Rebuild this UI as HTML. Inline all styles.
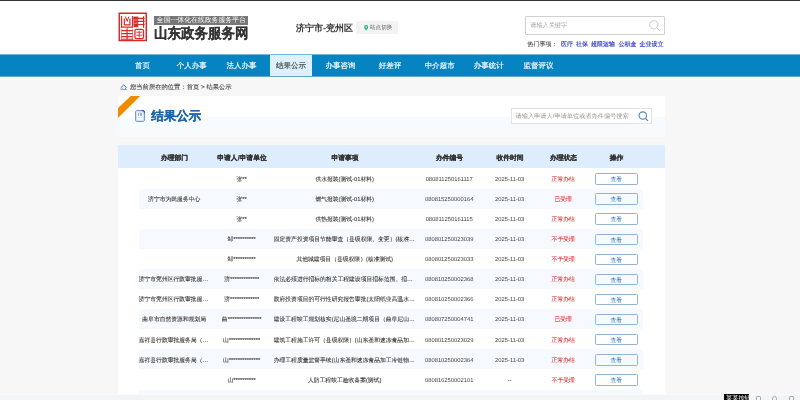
<!DOCTYPE html>
<html><head><meta charset="utf-8">
<style>
*{margin:0;padding:0;box-sizing:border-box}
html,body{width:800px;height:400px;overflow:hidden;text-rendering:geometricPrecision;background:#f7f7f7;font-family:"Liberation Sans",sans-serif;color:#333}
.abs{position:absolute}
#root{position:absolute;left:0;top:0;width:800px;height:400px;overflow:hidden;will-change:transform;background:#f7f7f7}
#top{left:0;top:0;width:800px;height:54px;background:#fff}
#topline{left:0;top:0;width:800px;height:1px;background:#333}
#nav{left:0;top:55px;width:800px;height:21px;background:#0683c1;box-shadow:0 -1px 0 rgba(6,131,193,0.55),0 1px 0 rgba(5,110,170,0.6)}
.nv{position:absolute;top:-0.4px;height:21.8px;line-height:21.5px;font-size:7.5px;color:#fff;-webkit-text-stroke-width:0.15px;text-align:center;width:42px}
.nv.on{background:#ddf1fc;color:#444}
#card{left:118px;top:96px;width:547px;height:297.5px}
#tbox{left:0;top:49.25px;width:547px;height:248.25px;background:#fff}
#chead{left:0;top:0;width:547px;height:40.5px;background:linear-gradient(#fff 48%,#f7fbfe 53%,#f7fbfe)}
#thead{left:0;top:49.25px;width:547px;height:23.15px;background:#ddedfd}
.th{position:absolute;top:1.3px;height:23.15px;line-height:23.15px;font-size:6.8px;font-weight:bold;color:#333;-webkit-text-stroke-width:0.15px;text-align:center}
.row{position:absolute;left:20.7px;width:504.7px;height:20.1px}
.row.s{background:#f6f9fe}
.td{position:absolute;top:1.4px;height:20px;line-height:20px;font-size:5.8px;color:#333;-webkit-text-stroke-width:0.08px;text-align:center;white-space:nowrap;overflow:hidden;text-overflow:ellipsis}
.red{color:#e03a3a}
.td.num{color:#444;-webkit-text-stroke-width:0}
.lk{top:41.4px;font-size:6px;line-height:9px;color:#2b3ac4;-webkit-text-stroke-width:0.15px;white-space:nowrap}
.btn{position:absolute;left:456px;top:4.9px;width:43.2px;height:11.4px;border:0.6px solid #93b4da;border-radius:1.5px;font-size:5.7px;color:#3170b8;text-align:center;line-height:12.2px}
</style></head><body>
<div id="root">
<div id="top" class="abs"></div>
<div id="topline" class="abs"></div>

<!-- logo -->
<svg class="abs" style="left:118px;top:12px" width="30" height="30" viewBox="0 0 30 30">
<g fill="none" stroke="#d42a2a" stroke-linecap="square">
<path d="M1.2 1.3H28.2M1.3 1.2V28.4M28.3 1.3V28.3M1.2 28.5H28.3" stroke-width="1.5"/>
<path d="M3.6 4.6V15.2H14.6V4.6M6.3 7V12.8H11.9V7" stroke-width="1.2"/>
<path d="M7.6 5L9 8.8M10.6 5L9.4 8.8" stroke-width="1"/>
<path d="M3.6 17V27.2M14.6 17V27.2" stroke-width="0.9" stroke="#e27a7a"/>
<path d="M4.2 18.6H14M4.2 21.6H14M4.2 24.6H14M9.1 16.8V27" stroke-width="1.2"/>
<path d="M3.6 27.2H14.6" stroke-width="1"/>
<path d="M15.8 6.3H26M20.3 9.4H26M20.3 12.5H26M25.6 4.8V15.2" stroke-width="1.2"/>
<rect x="16.9" y="17.3" width="8.6" height="9.4" rx="1.6" stroke-width="1.3"/>
<path d="M18.7 20.2H23.7M18.7 23.2H23.7M21.2 19.2V25" stroke-width="0.9"/>
</g>
<rect x="15.6" y="4.6" width="4.6" height="10.6" fill="#d42a2a"/>
<path d="M16.2 8H19.6M16.2 11.2H19.6" stroke="#f4c4c4" stroke-width="0.7"/>
</svg>
<div class="abs" style="left:154.4px;top:16px;width:93.2px;height:8.8px;background:#777;"></div>
<div class="abs" style="left:156.8px;top:16.9px;color:#fafafa;font-size:6.85px;line-height:8.4px;white-space:nowrap">全国一体化在线政务服务平台</div>
<div class="abs" style="left:154px;top:24.6px;font-size:13.5px;line-height:15px;color:#333;font-weight:bold;-webkit-text-stroke:0.1px #333;white-space:nowrap;transform:scale(1,1.06);transform-origin:0 0">山东政务服务网</div>

<div class="abs" style="left:296px;top:21.5px;font-size:9px;line-height:12px;color:#333;font-weight:bold;white-space:nowrap">济宁市-兖州区</div>
<div class="abs" style="left:356px;top:21.2px;width:42px;height:12.4px;background:#f3f3f3;border-radius:1px"></div>
<div class="abs" style="left:370px;top:21.8px;font-size:5.6px;line-height:12.4px;color:#555;white-space:nowrap">站点切换</div>
<svg class="abs" style="left:363.6px;top:25.2px" width="4.3" height="5.6" viewBox="0 0 10 14"><path d="M5 0C2.2 0 0 2.2 0 5c0 3.5 5 9 5 9s5-5.5 5-9C10 2.2 7.8 0 5 0z" fill="#2fb38a"/><circle cx="5" cy="5" r="2" fill="#fff"/></svg>

<!-- search -->
<div class="abs" style="left:525.3px;top:16.2px;width:139.7px;height:18.8px;border:0.7px solid #d0d0d0;border-radius:1px;background:#fff"></div>
<div class="abs" style="left:530.3px;top:17.2px;font-size:6.15px;line-height:17.8px;color:#a5a5a5;white-space:nowrap">请输入关键字</div>
<svg class="abs" style="left:649px;top:20px" width="11" height="11" viewBox="0 0 11 11"><circle cx="4.8" cy="4.8" r="4.2" fill="none" stroke="#b5b5b5" stroke-width="0.7"/><path d="M7.8 7.8L10.6 10.6" stroke="#b5b5b5" stroke-width="0.8"/></svg>
<div class="abs" style="left:527.5px;top:41.4px;font-size:6px;line-height:9px;color:#444;-webkit-text-stroke-width:0.08px;white-space:nowrap">热门事项：</div>
<div class="abs lk" style="left:561px">医疗</div>
<div class="abs lk" style="left:576px">社保</div>
<div class="abs lk" style="left:591px">超限运输</div>
<div class="abs lk" style="left:618.5px">公积金</div>
<div class="abs lk" style="left:639.5px">企业设立</div>

<!-- nav -->
<div id="nav" class="abs">
<div class="nv" style="left:121.5px">首页</div>
<div class="nv" style="left:170.8px">个人办事</div>
<div class="nv" style="left:220.5px">法人办事</div>
<div class="nv on" style="left:270.1px">结果公示</div>
<div class="nv" style="left:319.6px">办事咨询</div>
<div class="nv" style="left:369px">好差评</div>
<div class="nv" style="left:418.7px">中介超市</div>
<div class="nv" style="left:467.8px">办事统计</div>
<div class="nv" style="left:517.6px">监督评议</div>
</div>

<!-- breadcrumb -->
<svg class="abs" style="left:120px;top:83.5px" width="7.5" height="6.5" viewBox="0 0 15 13"><path d="M1.5 7.5L7.5 1.8L13.5 7.5" fill="none" stroke="#4d7fbf" stroke-width="2"/><path d="M4 7.5V10M11 7.5V10" stroke="#4d7fbf" stroke-width="1.6"/><path d="M1 11.5H14" stroke="#4d7fbf" stroke-width="1.8"/></svg>
<div class="abs" style="left:130px;top:82.5px;font-size:6.3px;line-height:10px;color:#444;-webkit-text-stroke-width:0.1px;white-space:nowrap">您当前所在的位置：首页 &gt; 结果公示</div>

<!-- card -->
<div id="card" class="abs">
 <div id="chead" class="abs"></div>
 <div id="tbox" class="abs"></div>
 <svg class="abs" style="left:0;top:0" width="23" height="23" viewBox="0 0 23 23"><path d="M12.8 0H22.2L0 22V12z" fill="#f08a00"/></svg>
 <svg class="abs" style="left:17px;top:13.5px" width="10" height="12" viewBox="0 0 10 12"><rect x="0.6" y="0.6" width="8.8" height="10.8" rx="1" fill="#e9f1fb" stroke="#6a91c6" stroke-width="1"/><rect x="2" y="2" width="6" height="8.2" fill="#fbfdff" stroke="#c0d3ec" stroke-width="0.5"/><path d="M6.8 0.6H8.2L9.4 1.8V3.2" fill="none" stroke="#2d5fa5" stroke-width="1.1"/><rect x="3" y="2.8" width="0.9" height="3" fill="#7f9fcc"/><rect x="4.8" y="2.8" width="2.2" height="3" fill="#8fb0d8"/><path d="M3 7.6H7.2" stroke="#c8d8ee" stroke-width="0.7"/></svg>
 <div class="abs" style="left:33.2px;top:13.2px;font-size:12.5px;line-height:15px;font-weight:bold;color:#1c63aa;-webkit-text-stroke:0.2px #1c63aa;white-space:nowrap">结果公示</div>
 <div class="abs" style="left:393.3px;top:12.4px;width:140.8px;height:15.2px;border:0.6px solid #e2e2e2;background:#fff"></div>
 <div class="abs" style="left:397.6px;top:14.3px;font-size:6.2px;line-height:14.5px;color:#999;white-space:nowrap">请输入申请人/申请单位或者办件编号搜索</div>
 <svg class="abs" style="left:519.6px;top:14.8px" width="11" height="11" viewBox="0 0 11 11"><circle cx="4.8" cy="4.6" r="3.7" fill="none" stroke="#4a80c0" stroke-width="1.1"/><path d="M7.4 7.3L10 9.9" stroke="#4a80c0" stroke-width="1.2"/></svg>

 <div id="thead" class="abs">
  <div class="th" style="left:21px;width:71px">办理部门</div>
  <div class="th" style="left:92px;width:64px">申请人/申请单位</div>
  <div class="th" style="left:156px;width:142px">申请事项</div>
  <div class="th" style="left:298px;width:67px">办件编号</div>
  <div class="th" style="left:365px;width:54px">收件时间</div>
  <div class="th" style="left:419px;width:53px">办理状态</div>
  <div class="th" style="left:472px;width:53px">操作</div>
 </div>
 <div id="rows">
<div class="row" style="top:72.4px"><div class="td" style="left:0px;width:71px"></div><div class="td" style="left:71px;width:64px">张**</div><div class="td" style="left:135px;width:142px">供水报装(测试-01材料)</div><div class="td num" style="left:277px;width:67px">080811250161117</div><div class="td num" style="left:344px;width:54px">2025-11-03</div><div class="td red" style="left:398px;width:53px">正常办结</div><div class="btn">查看</div></div>
<div class="row s" style="top:92.5px"><div class="td" style="left:0px;width:71px">济宁市为民服务中心</div><div class="td" style="left:71px;width:64px">张**</div><div class="td" style="left:135px;width:142px">燃气报装(测试-01材料)</div><div class="td num" style="left:277px;width:67px">080815250000164</div><div class="td num" style="left:344px;width:54px">2025-11-03</div><div class="td red" style="left:398px;width:53px">已受理</div><div class="btn">查看</div></div>
<div class="row" style="top:112.6px"><div class="td" style="left:0px;width:71px"></div><div class="td" style="left:71px;width:64px">张**</div><div class="td" style="left:135px;width:142px">供热报装(测试-01材料)</div><div class="td num" style="left:277px;width:67px">080811250161115</div><div class="td num" style="left:344px;width:54px">2025-11-03</div><div class="td red" style="left:398px;width:53px">正常办结</div><div class="btn">查看</div></div>
<div class="row s" style="top:132.7px"><div class="td" style="left:0px;width:71px"></div><div class="td" style="left:71px;width:64px">邹**********</div><div class="td" style="left:135px;width:142px">固定资产投资项目节能审查（县级权限、变更）(核准测试)</div><div class="td num" style="left:277px;width:67px">080801250023039</div><div class="td num" style="left:344px;width:54px">2025-11-03</div><div class="td red" style="left:398px;width:53px">不予受理</div><div class="btn">查看</div></div>
<div class="row" style="top:152.8px"><div class="td" style="left:0px;width:71px"></div><div class="td" style="left:71px;width:64px">邹**********</div><div class="td" style="left:135px;width:142px">其他城建项目（县级权限）(核准测试)</div><div class="td num" style="left:277px;width:67px">080801250023033</div><div class="td num" style="left:344px;width:54px">2025-11-03</div><div class="td red" style="left:398px;width:53px">不予受理</div><div class="btn">查看</div></div>
<div class="row s" style="top:172.9px"><div class="td" style="left:0px;width:71px">济宁市兖州区行政审批服务局</div><div class="td" style="left:71px;width:64px">济*************</div><div class="td" style="left:135px;width:142px">依法必须进行招标的相关工程建设项目招标范围、招标方式</div><div class="td num" style="left:277px;width:67px">080810250002368</div><div class="td num" style="left:344px;width:54px">2025-11-03</div><div class="td red" style="left:398px;width:53px">正常办结</div><div class="btn">查看</div></div>
<div class="row" style="top:193.0px"><div class="td" style="left:0px;width:71px">济宁市兖州区行政审批服务局</div><div class="td" style="left:71px;width:64px">济*************</div><div class="td" style="left:135px;width:142px">政府投资项目的可行性研究报告审批(太阳纸业高温水项目)</div><div class="td num" style="left:277px;width:67px">080810250002366</div><div class="td num" style="left:344px;width:54px">2025-11-03</div><div class="td red" style="left:398px;width:53px">正常办结</div><div class="btn">查看</div></div>
<div class="row s" style="top:213.1px"><div class="td" style="left:0px;width:71px">曲阜市自然资源和规划局</div><div class="td" style="left:71px;width:64px">曲***************</div><div class="td" style="left:135px;width:142px">建设工程竣工规划核实(尼山圣境二期项目（曲阜尼山）)</div><div class="td num" style="left:277px;width:67px">080807250004741</div><div class="td num" style="left:344px;width:54px">2025-11-03</div><div class="td red" style="left:398px;width:53px">已受理</div><div class="btn">查看</div></div>
<div class="row" style="top:233.2px"><div class="td" style="left:0px;width:71px">嘉祥县行政审批服务局（嘉祥县）</div><div class="td" style="left:71px;width:64px">山**************</div><div class="td" style="left:135px;width:142px">建筑工程施工许可（县级权限）(山东圣和速冻食品加工项目)</div><div class="td num" style="left:277px;width:67px">080801250023029</div><div class="td num" style="left:344px;width:54px">2025-11-03</div><div class="td red" style="left:398px;width:53px">正常办结</div><div class="btn">查看</div></div>
<div class="row s" style="top:253.3px"><div class="td" style="left:0px;width:71px">嘉祥县行政审批服务局（嘉祥县）</div><div class="td" style="left:71px;width:64px">山**************</div><div class="td" style="left:135px;width:142px">办理工程质量监督手续(山东圣和速冻食品加工冷链物流项目)</div><div class="td num" style="left:277px;width:67px">080810250002364</div><div class="td num" style="left:344px;width:54px">2025-11-03</div><div class="td red" style="left:398px;width:53px">正常办结</div><div class="btn">查看</div></div>
<div class="row" style="top:273.4px"><div class="td" style="left:0px;width:71px"></div><div class="td" style="left:71px;width:64px">山**********</div><div class="td" style="left:135px;width:142px">人防工程竣工验收备案(测试)</div><div class="td num" style="left:277px;width:67px">080816250002101</div><div class="td num" style="left:344px;width:54px">--</div><div class="td red" style="left:398px;width:53px">不予受理</div><div class="btn">查看</div></div>
<div class="row s" style="top:293.5px"></div>
</div>
</div>
</div>
</div>
</div>

<div class="abs" style="left:0;top:393.5px;width:800px;height:6.5px;background:#f3f4f6;border-top:0.6px solid #fafafa"></div>
<div class="abs" style="left:724px;top:394px;width:25px;height:6px;background:#0a0a0a"></div>
<div class="abs" style="left:724px;top:394px;width:25px;height:6px;overflow:hidden;will-change:transform"><div style="color:#fff;font-size:6.2px;line-height:10px;padding-left:2px;white-space:nowrap">某某按钮</div></div>
<div class="abs" style="left:755.5px;top:395.5px;width:5px;height:5px;border:0.8px solid #aaa;border-radius:1px"></div>
<div class="abs" style="left:772px;top:395.5px;width:5px;height:5px;border:0.8px solid #aaa;border-radius:2.5px 2.5px 0 0"></div>
<div class="abs" style="left:789px;top:395.5px;width:5px;height:5px;border:0.8px solid #aaa;border-radius:1px"></div>
</div>
</body></html>
